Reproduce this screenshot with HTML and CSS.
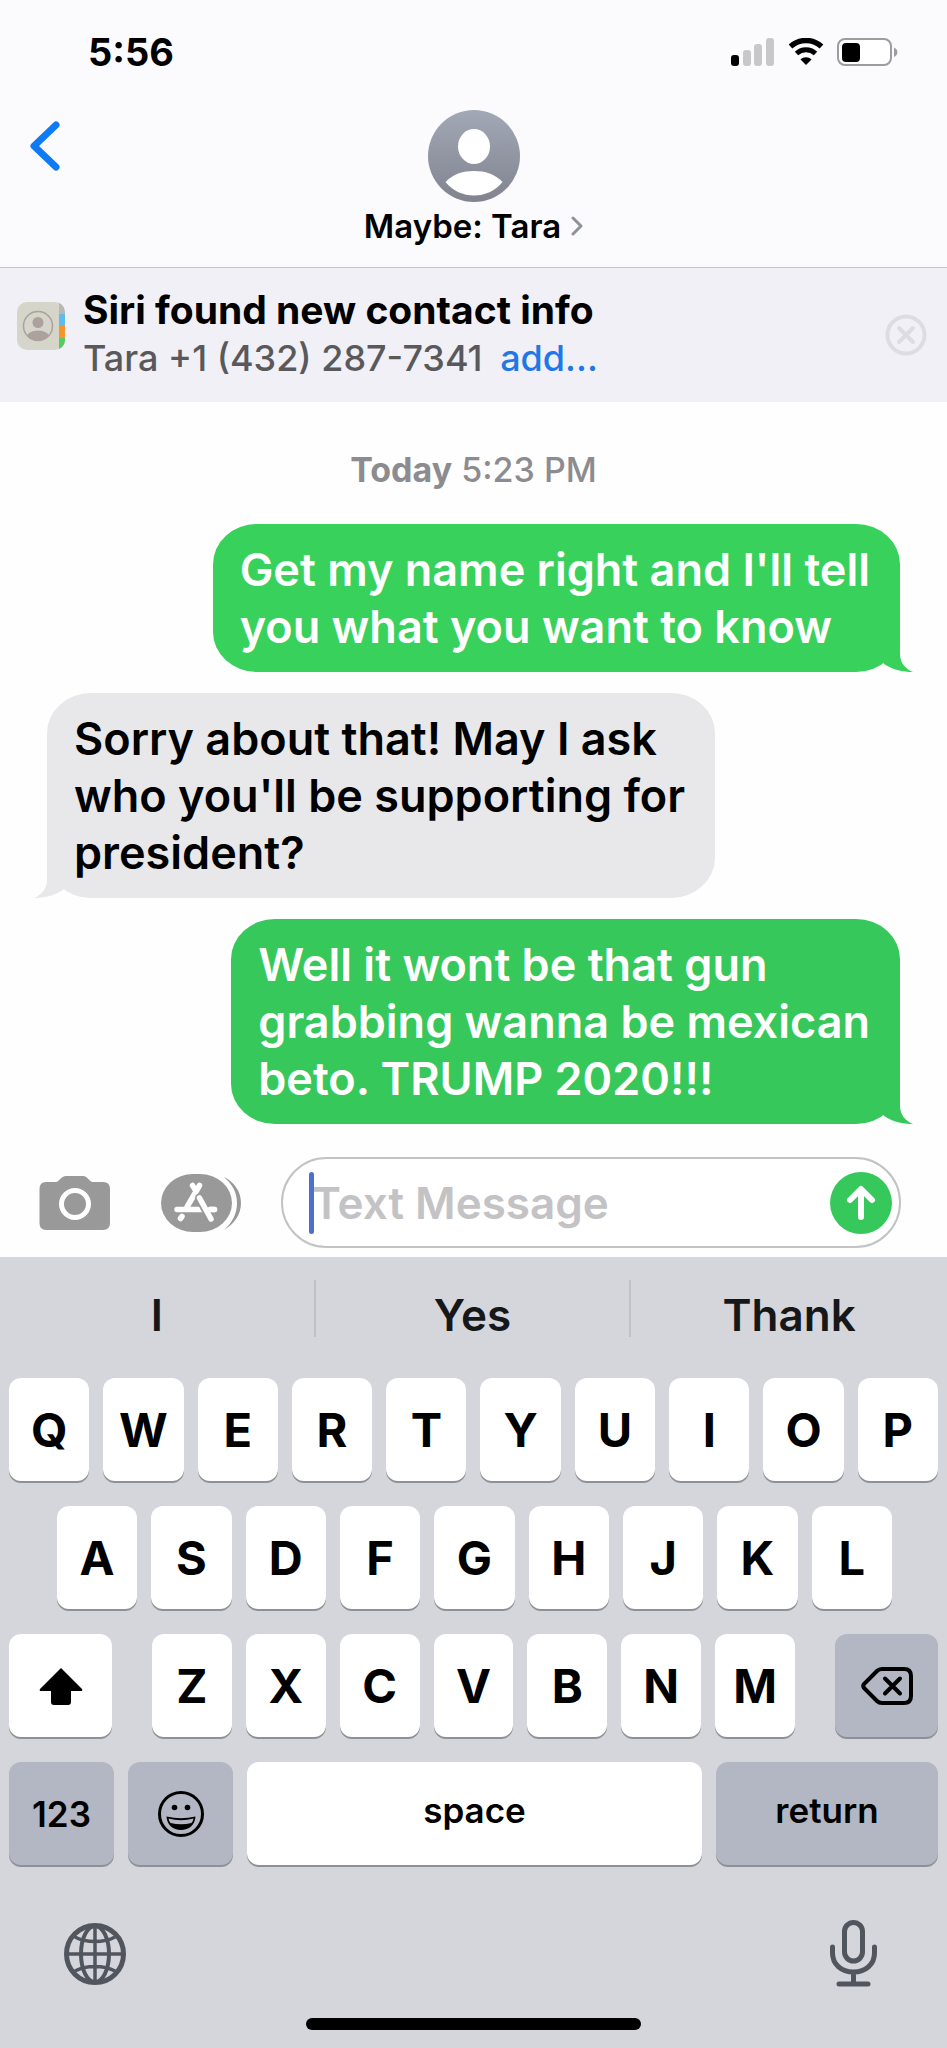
FILE: index.html
```html
<!DOCTYPE html>
<html lang="en">
<head>
    <meta charset="UTF-8">
    <meta name="viewport" content="width=device-width, initial-scale=1.0">
    <title>Messages</title>
    <link rel="stylesheet" href="styles.css">
</head>
<body>
    <header class="header">
        <div class="status-bar">
            <span class="time">5:56</span>
            <div class="status-icons">
                <svg width="44" height="28" viewBox="0 0 44 28">
                    <rect x="0" y="17" width="8" height="11" rx="3" fill="#000"/>
                    <rect x="12" y="12" width="8" height="16" rx="3" fill="#c8c8ca"/>
                    <rect x="23" y="6" width="8" height="22" rx="3" fill="#c8c8ca"/>
                    <rect x="35" y="0" width="8" height="28" rx="3" fill="#c8c8ca"/>
                </svg>
                <svg width="36" height="28" viewBox="0 0 36 28">
                    <path d="M2.5 8.5C11.5 0.5 24.5 0.5 33.5 8.5" fill="none" stroke="#000" stroke-width="5.5"/>
                    <path d="M8.5 15.5C14 10.5 22 10.5 27.5 15.5" fill="none" stroke="#000" stroke-width="5"/>
                    <path d="M12.5 21.5C15.5 18.6 20.5 18.6 23.5 21.5L18 27Z" fill="#000"/>
                </svg>
                <svg width="62" height="28" viewBox="0 0 62 28">
                    <rect x="1" y="1" width="53" height="26" rx="7" fill="#fff" stroke="#9d9d9f" stroke-width="2"/>
                    <rect x="5" y="5" width="18" height="19" rx="4" fill="#000"/>
                    <path d="M57 9.5C61.5 11.5 61.5 17 57 19Z" fill="#9d9d9f"/>
                </svg>
            </div>
        </div>
        <div class="nav-bar">
            <button type="button" class="back" aria-label="Back">
                <svg width="30" height="50" viewBox="0 0 30 50">
                    <path d="M26 4L4 25L26 46" fill="none" stroke="#0f7af5" stroke-width="7" stroke-linecap="round" stroke-linejoin="round"/>
                </svg>
            </button>
            <button type="button" class="contact">
                <svg width="92" height="92" viewBox="0 0 92 92">
                    <defs>
                        <linearGradient id="avatar" x1="0" y1="0" x2="0" y2="1">
                            <stop offset="0" stop-color="#a3a8b6"/>
                            <stop offset="1" stop-color="#81848f"/>
                        </linearGradient>
                    </defs>
                    <circle cx="46" cy="46" r="46" fill="url(#avatar)"/>
                    <ellipse cx="46" cy="36.5" rx="16" ry="17.5" fill="#fff"/>
                    <path d="M17.5 72C25 64 35 61 46 61S67 64 74.5 72C67 81 57 85.5 46 85.5S25 81 17.5 72Z" fill="#fff"/>
                </svg>
                <span class="contact-name">Maybe: Tara
                    <svg width="12" height="20" viewBox="0 0 12 20">
                        <path d="M2 2L10 10L2 18" fill="none" stroke="#8c919b" stroke-width="3" stroke-linecap="round" stroke-linejoin="round"/>
                    </svg>
                </span>
            </button>
        </div>
    </header>

    <section class="siri">
        <svg width="48" height="48" viewBox="0 0 48 48">
            <defs>
                <clipPath id="book"><rect width="48" height="48" rx="10"/></clipPath>
                <clipPath id="face"><circle cx="21" cy="24" r="14.5"/></clipPath>
            </defs>
            <g clip-path="url(#book)">
                <rect width="48" height="48" fill="#d6d5ca"/>
                <rect x="42" width="6" height="12" fill="#b9b8b0"/>
                <rect x="42" y="12" width="6" height="12" fill="#5cbbf0"/>
                <rect x="42" y="24" width="6" height="12" fill="#f8952a"/>
                <rect x="42" y="36" width="6" height="12" fill="#55cb62"/>
            </g>
            <circle cx="21" cy="24" r="14.5" fill="none" stroke="#a9a39d" stroke-width="1.5"/>
            <circle cx="21" cy="20.5" r="5.5" fill="#aca19c"/>
            <ellipse cx="21" cy="36" rx="12" ry="7.5" fill="#aca19c" clip-path="url(#face)"/>
        </svg>
        <div class="siri-text">
            <h2>Siri found new contact info</h2>
            <p>Tara +1 (432) 287-7341 <a href="#">add...</a></p>
        </div>
        <button type="button" class="dismiss" aria-label="Dismiss">
            <svg width="42" height="42" viewBox="0 0 42 42">
                <circle cx="21" cy="21" r="18.5" fill="none" stroke="#dddce2" stroke-width="4"/>
                <path d="M14 14L28 28M28 14L14 28" stroke="#dddce2" stroke-width="4" stroke-linecap="round"/>
            </svg>
        </button>
    </section>

    <main class="messages">
        <div class="stamp"><b>Today</b> 5:23 PM</div>
        <div class="bubble sent first">
            Get my name right and I'll tell<br>you what you want to know
            <svg class="tail" width="44" height="44" viewBox="0 0 44 44">
                <path d="M10 0H31V26C31 34 36 41 44 44C34 44 24 42 15 36L5 20Z"/>
            </svg>
        </div>
        <div class="bubble received">
            Sorry about that! May I ask<br>who you'll be supporting for<br>president?
            <svg class="tail" width="44" height="44" viewBox="0 0 44 44">
                <path d="M34 0H13V26C13 34 8 41 0 44C10 44 20 42 29 36L39 20Z"/>
            </svg>
        </div>
        <div class="bubble sent">
            Well it wont be that gun<br>grabbing wanna be mexican<br>beto. TRUMP 2020!!!
            <svg class="tail" width="44" height="44" viewBox="0 0 44 44">
                <path d="M10 0H31V26C31 34 36 41 44 44C34 44 24 42 15 36L5 20Z"/>
            </svg>
        </div>
    </main>

    <form class="compose">
        <button type="button" aria-label="Camera">
            <svg width="72" height="56" viewBox="0 0 72 56">
                <path d="M7 7H17C20 7 22 1 27 1H44C49 1 50 7 54 7H64Q71 7 71 14V48Q71 55 64 55H7Q0.5 55 0.5 48V14Q0.5 7 7 7Z" fill="#999"/>
                <circle cx="36" cy="29" r="13.5" fill="none" stroke="#fff" stroke-width="5"/>
            </svg>
        </button>
        <button type="button" aria-label="Apps">
            <svg width="80" height="58" viewBox="0 0 80 58">
                <rect width="71" height="58" rx="32" ry="29" fill="#999"/>
                <path d="M63 3C73 8 80 17 80 29S73 50 63 56C71 49 76 40 76 29S71 10 63 3Z" fill="#999"/>
                <g fill="none" stroke="#fff" stroke-width="5.5" stroke-linecap="round">
                    <path d="M38.5 11.5L26 33M31.5 11.5L35 17M16 35.5H53.5M21 42.5L19.5 44.5"/>
                    <path d="M38.5 24L50 45" stroke="#999" stroke-width="9"/>
                    <path d="M38.5 24L50 45M49 35.5H53.5"/>
                </g>
            </svg>
        </button>
        <div class="field">
            <span class="caret"></span>
            <input type="text" placeholder="Text Message" aria-label="Text Message">
            <button type="button" class="send" aria-label="Send">
                <svg width="62" height="62" viewBox="0 0 62 62">
                    <circle cx="31" cy="31" r="31" fill="#36c85a"/>
                    <path d="M31 45V18M20 28L31 17L42 28" fill="none" stroke="#fff" stroke-width="6" stroke-linecap="round" stroke-linejoin="round"/>
                </svg>
            </button>
        </div>
    </form>

    <section class="keyboard">
        <div class="suggestions">
            <button type="button">I</button>
            <button type="button">Yes</button>
            <button type="button">Thank</button>
        </div>
        <div class="rows">
            <div class="row">
                <button type="button" class="key">Q</button>
                <button type="button" class="key">W</button>
                <button type="button" class="key">E</button>
                <button type="button" class="key">R</button>
                <button type="button" class="key">T</button>
                <button type="button" class="key">Y</button>
                <button type="button" class="key">U</button>
                <button type="button" class="key">I</button>
                <button type="button" class="key">O</button>
                <button type="button" class="key">P</button>
            </div>
            <div class="row middle">
                <button type="button" class="key">A</button>
                <button type="button" class="key">S</button>
                <button type="button" class="key">D</button>
                <button type="button" class="key">F</button>
                <button type="button" class="key">G</button>
                <button type="button" class="key">H</button>
                <button type="button" class="key">J</button>
                <button type="button" class="key">K</button>
                <button type="button" class="key">L</button>
            </div>
            <div class="row bottom">
                <button type="button" class="key" aria-label="Shift">
                    <svg width="44" height="38" viewBox="0 0 44 38">
                        <path d="M22 1L43 22Q44 24 42 24H32V35Q32 38 29 38H15Q12 38 12 35V24H2Q0 24 1 22Z"/>
                    </svg>
                </button>
                <div class="letters">
                    <button type="button" class="key">Z</button>
                    <button type="button" class="key">X</button>
                    <button type="button" class="key">C</button>
                    <button type="button" class="key">V</button>
                    <button type="button" class="key">B</button>
                    <button type="button" class="key">N</button>
                    <button type="button" class="key">M</button>
                </div>
                <button type="button" class="key dark" aria-label="Delete">
                    <svg width="52" height="38" viewBox="0 0 52 38">
                        <path d="M21 2H43Q50 2 50 9V29Q50 36 43 36H21Q18 36 16 34L3 21Q1.5 19 3 17L16 4Q18 2 21 2Z" fill="none" stroke="#000" stroke-width="4"/>
                        <path d="M24 11.5L39 26.5M39 11.5L24 26.5" stroke="#000" stroke-width="4" stroke-linecap="round"/>
                    </svg>
                </button>
            </div>
            <div class="row controls">
                <button type="button" class="key dark">123</button>
                <button type="button" class="key dark" aria-label="Emoji">
                    <svg width="46" height="46" viewBox="0 0 46 46">
                        <circle cx="23" cy="23" r="21.5" fill="none" stroke="#000" stroke-width="3"/>
                        <circle cx="16.5" cy="16.5" r="2.8"/>
                        <circle cx="29.5" cy="16.5" r="2.8"/>
                        <path d="M8.5 25.5Q23 29 37.5 25.5C37 34 31 39 23 39S9 34 8.5 25.5Z"/>
                        <path d="M10.5 27.5Q23 31 35.5 27.5Q35 30.5 33.5 32Q23 34.5 12.5 32Q11 30.5 10.5 27.5Z" fill="#b3b7c3"/>
                    </svg>
                </button>
                <button type="button" class="key word space">space</button>
                <button type="button" class="key word return dark">return</button>
            </div>
        </div>
        <div class="dock">
            <button type="button" aria-label="Next keyboard">
                <svg width="62" height="62" viewBox="0 0 62 62" fill="none" stroke="#51555e" stroke-width="4">
                    <circle cx="31" cy="31" r="28.5" stroke-width="5"/>
                    <ellipse cx="31" cy="31" rx="14" ry="28"/>
                    <path d="M31 3V59M3 31H59M11 14C22 20 40 20 51 14M11 48C22 42 40 42 51 48" stroke-width="3.5"/>
                </svg>
            </button>
            <button type="button" aria-label="Dictate">
                <svg width="47" height="67" viewBox="0 0 47 67" fill="none" stroke="#51555e" stroke-linecap="round">
                    <rect x="14.5" y="2.5" width="18" height="38.5" rx="9" stroke-width="5"/>
                    <path d="M2.5 27V33C2.5 44 11 52 23.5 52S44.5 44 44.5 33V27M23.5 52V64M9 64H38" stroke-width="5"/>
                </svg>
            </button>
        </div>
        <div class="home-bar"></div>
    </section>
</body>
</html>
```

FILE: styles.css
```css
* {
    box-sizing: border-box;
}
body {
    margin: 0;
    min-height: 100vh;
    display: flex;
    flex-direction: column;
    background-color: #fefefe;
    color: #000;
    font-family: Inter, "Liberation Sans", sans-serif;
    font-weight: 600;
}
h2, p {
    margin: 0;
}
button {
    border: none;
    padding: 0;
    background: none;
    color: inherit;
    font: inherit;
    cursor: pointer;
}
svg {
    display: block;
}

/* Top bar */
.header {
    height: 268px;
    background-color: #fbfbfd;
    border-bottom: 1px solid #c3c3ca;
}
.status-bar {
    display: flex;
    justify-content: space-between;
    align-items: center;
    height: 104px;
    padding: 0 48px 0 88px;
}
.time {
    font-size: 38px;
    font-weight: 700;
}
.status-icons {
    display: flex;
    gap: 13px;
}
.nav-bar {
    display: grid;
    grid-template-columns: 90px 1fr 90px;
    align-items: start;
    padding-top: 6px;
}
.back {
    padding: 11px 30px;
}
.contact {
    display: flex;
    flex-direction: column;
    align-items: center;
    gap: 4px;
}
.contact-name {
    display: flex;
    align-items: center;
    gap: 10px;
    font-size: 33px;
    line-height: 40px;
}

/* Siri suggestion */
.siri {
    display: flex;
    align-items: center;
    gap: 18px;
    height: 134px;
    padding: 0 20px 18px 17px;
    background-color: #f1f0f6;
}
.siri-text {
    flex: 1;
    padding-top: 15px;
}
.siri-text h2 {
    font-size: 39px;
    font-weight: 700;
    line-height: 48px;
}
.siri-text p {
    color: #59595c;
    font-size: 36px;
    font-weight: 500;
    line-height: 48px;
}
.siri-text a {
    margin-left: 8px;
    color: #1f78e8;
    text-decoration: none;
}
.dismiss {
    padding-top: 18px;
}

/* Conversation */
.messages {
    display: flex;
    flex-direction: column;
    align-items: flex-start;
    gap: 21px;
    padding: 47px 47px 33px;
}
.stamp {
    align-self: center;
    margin-bottom: 12px;
    color: #8c8c90;
    font-size: 34px;
    font-weight: 500;
    line-height: 42px;
}
.stamp b {
    font-weight: 700;
}
.bubble {
    position: relative;
    padding: 17px 30px 17px 27px;
    border-radius: 44px / 40px;
    font-size: 45px;
    line-height: 57px;
    white-space: nowrap;
}
.sent {
    align-self: flex-end;
    background-color: #36c85a;
    color: #fff;
    fill: #36c85a;
}
.sent.first {
    background-color: #38d15c;
    fill: #38d15c;
}
.received {
    background-color: #e8e8ea;
    fill: #e8e8ea;
}
.tail {
    position: absolute;
    bottom: 0;
    right: -13px;
}
.received .tail {
    right: auto;
    left: -13px;
}

/* Compose */
.compose {
    display: flex;
    align-items: center;
    padding: 0 46px 9px 39px;
}
.compose > button {
    margin-right: 50px;
}
.compose > button + button {
    margin-right: 40px;
}
.field {
    position: relative;
    flex: 1;
    min-width: 0;
    display: flex;
    align-items: center;
    height: 91px;
    padding: 0 7px 0 29px;
    border: 2px solid #c3c2c4;
    border-radius: 46px;
    background-color: #fff;
}
.field input {
    flex: 1;
    min-width: 0;
    padding: 0;
    border: none;
    outline: none;
    background: none;
    color: #000;
    font: inherit;
    font-size: 44px;
}
.field input::placeholder {
    color: #c3c3c5;
    opacity: 1;
}
.caret {
    position: absolute;
    top: 13px;
    left: 26px;
    width: 5px;
    height: 62px;
    border-radius: 3px;
    background-color: #4d70d0;
}

/* Keyboard */
.keyboard {
    flex: 1;
    display: flex;
    flex-direction: column;
    padding: 0 9px 18px;
    background-color: #d5d6dc;
}
.suggestions {
    display: grid;
    grid-template-columns: repeat(3, 1fr);
    margin: 23px -9px 41px;
}
.suggestions button {
    height: 57px;
    padding-top: 14px;
    border-right: 2px solid #c0c1c6;
    color: #161719;
    font-size: 44px;
    line-height: 43px;
}
.suggestions button:last-child {
    border-right: none;
}
.rows {
    display: flex;
    flex-direction: column;
    gap: 25px;
}
.row, .letters {
    display: flex;
    gap: 14px;
}
.middle {
    padding: 0 46px 0 48px;
}
.bottom {
    gap: 40px;
}
.key {
    flex: 1 1 0;
    min-width: 0;
    display: flex;
    justify-content: center;
    align-items: center;
    height: 103px;
    border-radius: 12px;
    background-color: #fff;
    box-shadow: 0 2px 0 #8f9096;
    font-size: 47px;
    font-weight: 700;
}
.dark {
    background-color: #b3b7c3;
}
.bottom > .key {
    flex-grow: 103;
}
.letters {
    flex: 643 1 0;
}
.controls .key {
    flex-grow: 105;
    font-size: 35px;
    font-weight: 600;
}
.controls .word {
    padding-bottom: 8px;
}
.controls .space {
    flex-grow: 455;
}
.controls .return {
    flex-grow: 222;
}
.dock {
    display: flex;
    justify-content: space-between;
    align-items: center;
    margin-top: 55px;
    padding: 0 61px 0 55px;
}
.home-bar {
    width: 36%;
    height: 12px;
    margin: auto auto 0;
    border-radius: 6px;
    background-color: #000;
}
```
